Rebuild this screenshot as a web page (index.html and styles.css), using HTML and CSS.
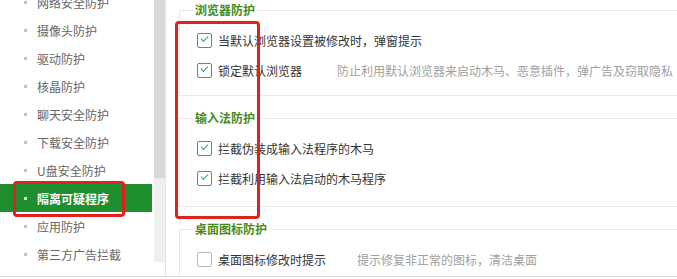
FILE: index.html
```html
<!DOCTYPE html>
<html lang="zh-CN">
<head>
<meta charset="UTF-8">
<link rel="stylesheet" href="styles.css">
</head>
<body>

<div class="page">
  <!-- left menu, scrolled part way down -->
  <div class="sidebar">
    <ul class="nav">
      <li>网络安全防护</li>
      <li>摄像头防护</li>
      <li>驱动防护</li>
      <li>核晶防护</li>
      <li>聊天安全防护</li>
      <li>下载安全防护</li>
      <li>U盘安全防护</li>
      <li class="active">隔离可疑程序</li>
      <li>应用防护</li>
      <li>第三方广告拦截</li>
      <li>网购安全防护</li>
    </ul>
    <div class="scrollbar"><div class="thumb"></div></div>
  </div>

  <div class="content">
    <fieldset class="group">
      <legend>浏览器防护</legend>
      <div class="row">
        <span class="check on"></span>
        <span class="label">当默认浏览器设置被修改时，弹窗提示</span>
      </div>
      <div class="row">
        <span class="check on"></span>
        <span class="label">锁定默认浏览器</span>
        <span class="desc desc-browser">防止利用默认浏览器来启动木马、恶意插件，弹广告及窃取隐私</span>
      </div>
    </fieldset>

    <fieldset class="group group-tall">
      <legend>输入法防护</legend>
      <div class="row">
        <span class="check on"></span>
        <span class="label">拦截伪装成输入法程序的木马</span>
      </div>
      <div class="row">
        <span class="check on"></span>
        <span class="label">拦截利用输入法启动的木马程序</span>
      </div>
    </fieldset>

    <fieldset class="group">
      <legend>桌面图标防护</legend>
      <div class="row">
        <span class="check"></span>
        <span class="label">桌面图标修改时提示</span>
        <span class="desc desc-desktop">提示修复非正常的图标，清洁桌面</span>
      </div>
    </fieldset>
  </div>

  <!-- red annotation boxes drawn over the screenshot -->
  <div class="mark mark-nav"></div>
  <div class="mark mark-checks"></div>
</div>

</body>
</html>
```

FILE: styles.css
```css
body {
  margin: 0;
  padding: 0;
  background-color: #fff;
  font-family: "Noto Sans CJK SC", "Microsoft YaHei", sans-serif;
  font-size: 12px;
  color: #333;
}
.page {
  position: relative;
  display: flex;
  height: 276px;
  border-bottom: 1px solid #dcdcdc;
  overflow: hidden;
}

/* sidebar */
.sidebar {
  display: flex;
  width: 165px;
  flex-shrink: 0;
  border-right: 1px solid #e3e3e3;
}
.nav {
  list-style: none;
  margin: -12px 0 0 0;
  padding: 0;
  width: 152px;
}
.nav li {
  display: flex;
  align-items: center;
  height: 28px;
  padding-left: 24px;
  color: #666;
}
.nav li::before {
  content: "";
  width: 3px;
  height: 3px;
  margin-right: 10px;
  background-color: #c4c4c4;
}
.nav li.active {
  background-color: #1e8e2e;
  color: #fff;
  font-weight: bold;
}
.nav li.active::before {
  background-color: #cfe8d2;
}
.scrollbar {
  width: 11px;
  height: 262px;
  margin-left: 2px;
  background-color: #efefef;
}
.thumb {
  height: 178px;
  background-color: #d9d9d9;
}

/* option groups */
.content {
  flex: 1;
  padding-left: 13px;
  overflow: hidden;
}
.group {
  width: 600px;
  margin: 2px 0 14px 0;
  padding: 7px 0 10px 13px;
  border: 1px solid #e8e8e8;
}
.group + .group {
  margin-top: 0;
}
.group-tall {
  padding-bottom: 13px;
}
.group legend {
  padding: 0 2px;
  line-height: 16px;
  color: #468a1c;
  font-weight: bold;
}
.row {
  display: flex;
  align-items: center;
  height: 30px;
  padding-left: 4px;
  white-space: nowrap;
}
.check {
  position: relative;
  width: 13px;
  height: 13px;
  margin-right: 6px;
  border: 1px solid #b9b9b9;
  border-radius: 2px;
  background-color: #fff;
}
.check.on {
  border-color: #36a55a;
}
.check.on::after {
  content: "";
  position: absolute;
  left: 3px;
  top: 2px;
  width: 6px;
  height: 3px;
  border-left: 1.5px solid #36a55a;
  border-bottom: 1.5px solid #36a55a;
  transform: rotate(-45deg);
}
.label {
  color: #333;
}
.desc {
  color: #a0a0a0;
}
.desc-browser {
  margin-left: 35px;
}
.desc-desktop {
  margin-left: 31px;
}

/* red annotation frames */
.mark {
  position: absolute;
  border: 3px solid #e0211d;
  border-radius: 4px;
}
.mark-nav {
  left: 13px;
  top: 181px;
  width: 106px;
  height: 30px;
}
.mark-checks {
  left: 175px;
  top: 21px;
  width: 79px;
  height: 192px;
}
```
